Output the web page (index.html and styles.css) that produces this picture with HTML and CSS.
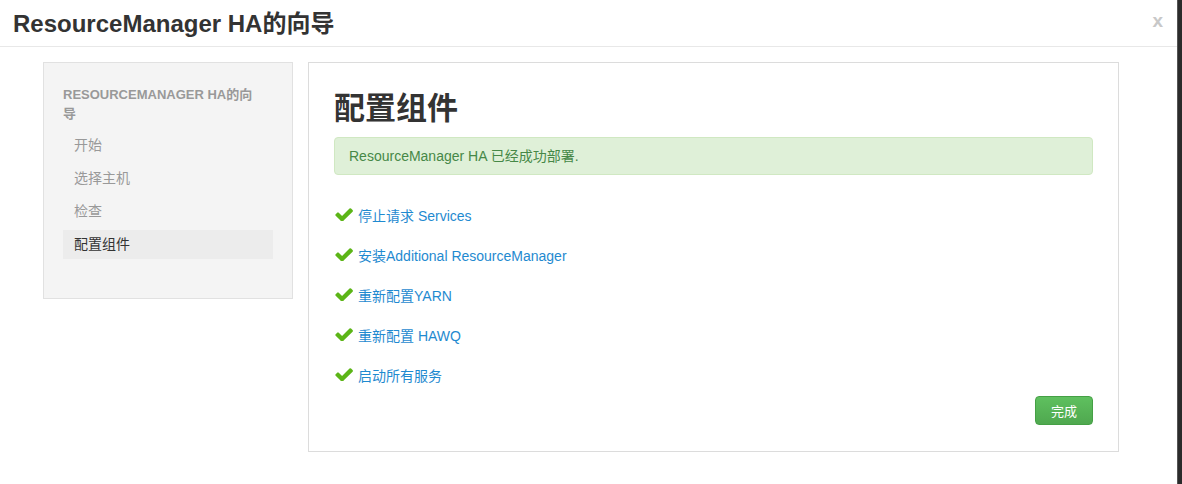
FILE: index.html
```html
<!DOCTYPE html>
<html>
<head>
<meta charset="utf-8">
<link rel="stylesheet" href="styles.css">
</head>
<body>
<div class="page">
  <div class="modal">
    <div class="modal-header">
      <h3 class="title">ResourceManager HA的向导</h3>
      <span class="close">x</span>
    </div>
    <div class="modal-body">
      <div class="sidebar">
        <div class="nav-header">RESOURCEMANAGER HA的向导</div>
        <ul class="nav">
          <li class="nav-item">开始</li>
          <li class="nav-item">选择主机</li>
          <li class="nav-item">检查</li>
          <li class="nav-item active">配置组件</li>
        </ul>
      </div>
      <div class="content">
        <h2 class="heading">配置组件</h2>
        <div class="alert">ResourceManager HA 已经成功部署.</div>
        <ul class="tasks">
          <li class="task"><svg class="check" viewBox="90 330 1590 1110"><path d="M1671 566q0 40-28 68l-724 724-136 136q-28 28-68 28t-68-28l-136-136-362-362q-28-28-28-68t28-68l136-136q28-28 68-28t68 28l294 295 656-657q28-28 68-28t68 28l136 136q28 28 28 68z"/></svg><a class="task-link">停止请求 Services</a></li>
          <li class="task"><svg class="check" viewBox="90 330 1590 1110"><path d="M1671 566q0 40-28 68l-724 724-136 136q-28 28-68 28t-68-28l-136-136-362-362q-28-28-28-68t28-68l136-136q28-28 68-28t68 28l294 295 656-657q28-28 68-28t68 28l136 136q28 28 28 68z"/></svg><a class="task-link">安装Additional ResourceManager</a></li>
          <li class="task"><svg class="check" viewBox="90 330 1590 1110"><path d="M1671 566q0 40-28 68l-724 724-136 136q-28 28-68 28t-68-28l-136-136-362-362q-28-28-28-68t28-68l136-136q28-28 68-28t68 28l294 295 656-657q28-28 68-28t68 28l136 136q28 28 28 68z"/></svg><a class="task-link">重新配置YARN</a></li>
          <li class="task"><svg class="check" viewBox="90 330 1590 1110"><path d="M1671 566q0 40-28 68l-724 724-136 136q-28 28-68 28t-68-28l-136-136-362-362q-28-28-28-68t28-68l136-136q28-28 68-28t68 28l294 295 656-657q28-28 68-28t68 28l136 136q28 28 28 68z"/></svg><a class="task-link">重新配置 HAWQ</a></li>
          <li class="task"><svg class="check" viewBox="90 330 1590 1110"><path d="M1671 566q0 40-28 68l-724 724-136 136q-28 28-68 28t-68-28l-136-136-362-362q-28-28-28-68t28-68l136-136q28-28 68-28t68 28l294 295 656-657q28-28 68-28t68 28l136 136q28 28 28 68z"/></svg><a class="task-link">启动所有服务</a></li>
        </ul>
        <div class="actions">
          <button class="btn-success">完成</button>
        </div>
      </div>
    </div>
  </div>
</div>
</body>
</html>
```
FILE: styles.css
```css
html, body {
  margin: 0;
  padding: 0;
}
body {
  font-family: "Liberation Sans", Arial, "Noto Sans CJK SC", sans-serif;
  font-size: 14px;
  color: #333;
  background: #2b2b2b;
  width: 1182px;
  height: 484px;
  overflow: hidden;
}
.page {
  display: flex;
  height: 484px;
}
.modal {
  width: 1178px;
  height: 484px;
  background: #fff;
  border-right: 1px solid #555;
  box-sizing: border-box;
}
.modal-header {
  height: 46px;
  border-bottom: 1px solid #e8e8e8;
  display: flex;
  align-items: center;
  justify-content: space-between;
  padding: 0 14px 0 13px;
}
.title {
  margin: 0;
  font-size: 24px;
  font-weight: bold;
  color: #333;
  line-height: 30px;
  padding-top: 2px;
}
.close {
  font-size: 19px;
  font-weight: bold;
  color: #c8c8c8;
  line-height: 20px;
  margin-top: -4px;
}
.modal-body {
  display: flex;
  align-items: flex-start;
  padding: 15px 0 0 43px;
  gap: 15px;
}
.sidebar {
  width: 250px;
  height: 237px;
  box-sizing: border-box;
  background: #f4f4f4;
  border: 1px solid #e1e1e1;
  padding: 22px 19px 0 19px;
}
.nav-header {
  font-size: 13px;
  font-weight: bold;
  color: #999;
  line-height: 19px;
  padding-right: 14px;
}
.nav {
  list-style: none;
  margin: 8px 0 0 0;
  padding: 0;
}
.nav-item {
  height: 29px;
  line-height: 29px;
  padding-left: 11px;
  color: #999;
  font-size: 14px;
  margin-bottom: 4px;
}
.nav-item.active {
  background: #ececec;
  color: #333;
}
.content {
  width: 811px;
  height: 390px;
  box-sizing: border-box;
  border: 1px solid #dcdcdc;
  padding: 0 25px 0 25px;
}
.heading {
  margin: 27px 0 0 0;
  font-size: 31px;
  font-weight: bold;
  line-height: 38px;
  color: #333;
}
.alert {
  margin-top: 9px;
  height: 38px;
  box-sizing: border-box;
  background: #dff0d8;
  border: 1px solid #d0e8c2;
  border-radius: 4px;
  color: #468847;
  padding: 0 14px;
  line-height: 36px;
  font-size: 14px;
}
.tasks {
  list-style: none;
  margin: 21px 0 0 0;
  padding: 0;
}
.task {
  display: flex;
  align-items: center;
  height: 40px;
  line-height: 40px;
}
.check {
  width: 18px;
  height: 13px;
  fill: #5cb517;
  margin: -4px 5px 0 1px;
}
.task-link {
  color: #1f8ad0;
  font-size: 14px;
}
.actions {
  display: flex;
  justify-content: flex-end;
  margin-top: 0;
}
.btn-success {
  width: 58px;
  height: 29px;
  border: 1px solid #45a045;
  border-radius: 4px;
  background: linear-gradient(#5fc05f, #4fa84f);
  color: #fff;
  font-family: "Liberation Sans", "Noto Sans CJK SC", sans-serif;
  font-size: 13px;
  padding: 0;
}
```
